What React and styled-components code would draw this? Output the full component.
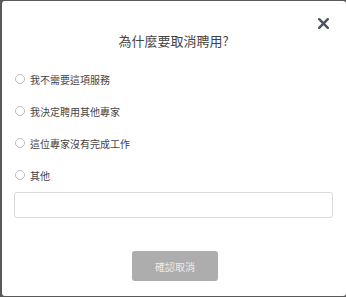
import styled, { createGlobalStyle } from "styled-components";

const GlobalStyle = createGlobalStyle`
  html, body {
    margin: 0;
    padding: 0;
    background: #595959;
    font-family: "Noto Sans CJK TC", "Noto Sans", sans-serif;
  }
  * { box-sizing: border-box; }
`;

const Backdrop = styled.div`
  width: 346px;
  height: 297px;
  padding: 1px 0 0 2px;
  overflow: hidden;
`;

const Modal = styled.div`
  width: 344px;
  height: 295px;
  background: #fff;
  border-radius: 3px;
  padding: 14px 13px 15px 12px;
  display: flex;
  flex-direction: column;
`;

const CloseRow = styled.div`
  display: flex;
  justify-content: flex-end;
  height: 16px;
  padding-right: 2px;
`;

const CloseButton = styled.button`
  width: 16px;
  height: 16px;
  padding: 0;
  border: 0;
  background: none;
  display: flex;
  align-items: center;
  justify-content: center;
  cursor: pointer;
`;

const Title = styled.h2`
  margin: 1px 0 0;
  font-size: 13px;
  line-height: 18px;
  font-weight: 400;
  color: #444;
  text-align: center;
`;

const Options = styled.div`
  margin-top: 13px;
  display: flex;
  flex-direction: column;
`;

const Option = styled.label`
  height: 32px;
  display: flex;
  align-items: center;
  gap: 5px;
  padding-left: 1px;
  font-size: 10px;
  color: #444;
  cursor: pointer;
`;

const Radio = styled.span`
  width: 10px;
  height: 10px;
  border-radius: 50%;
  border: 1px solid ${(p) => (p.$checked ? "#666" : "#bdbdbd")};
  background: #fff;
`;

const TextInput = styled.input`
  margin-top: 1px;
  height: 26px;
  width: 100%;
  border: 1px solid #d9d9d9;
  border-radius: 3px;
  outline: none;
  padding: 0 8px;
  font-size: 10px;
  font-family: inherit;
`;

const Footer = styled.div`
  margin-top: 33px;
  display: flex;
  justify-content: center;
`;

const ConfirmButton = styled.button`
  width: 86px;
  height: 30px;
  border: 0;
  border-radius: 3px;
  background: #adadad;
  color: #ececec;
  font-family: inherit;
  font-size: 10px;
  margin-left: 3px;
`;

const reasons = ["我不需要這項服務", "我決定聘用其他專家", "這位專家沒有完成工作", "其他"];

export default function App() {
  return (
    <>
      <GlobalStyle />
      <Backdrop>
        <Modal>
          <CloseRow>
            <CloseButton aria-label="close">
              <svg width="11" height="11" viewBox="0 0 11 11">
                <path d="M1.2 1.2 L9.8 9.8 M9.8 1.2 L1.2 9.8" stroke="#4b5263" strokeWidth="2.4" strokeLinecap="round" />
              </svg>
            </CloseButton>
          </CloseRow>
          <Title>為什麼要取消聘用?</Title>
          <Options>
            {reasons.map((r) => (
              <Option key={r}>
                <Radio />
                {r}
              </Option>
            ))}
          </Options>
          <TextInput type="text" />
          <Footer>
            <ConfirmButton disabled>確認取消</ConfirmButton>
          </Footer>
        </Modal>
      </Backdrop>
    </>
  );
}
